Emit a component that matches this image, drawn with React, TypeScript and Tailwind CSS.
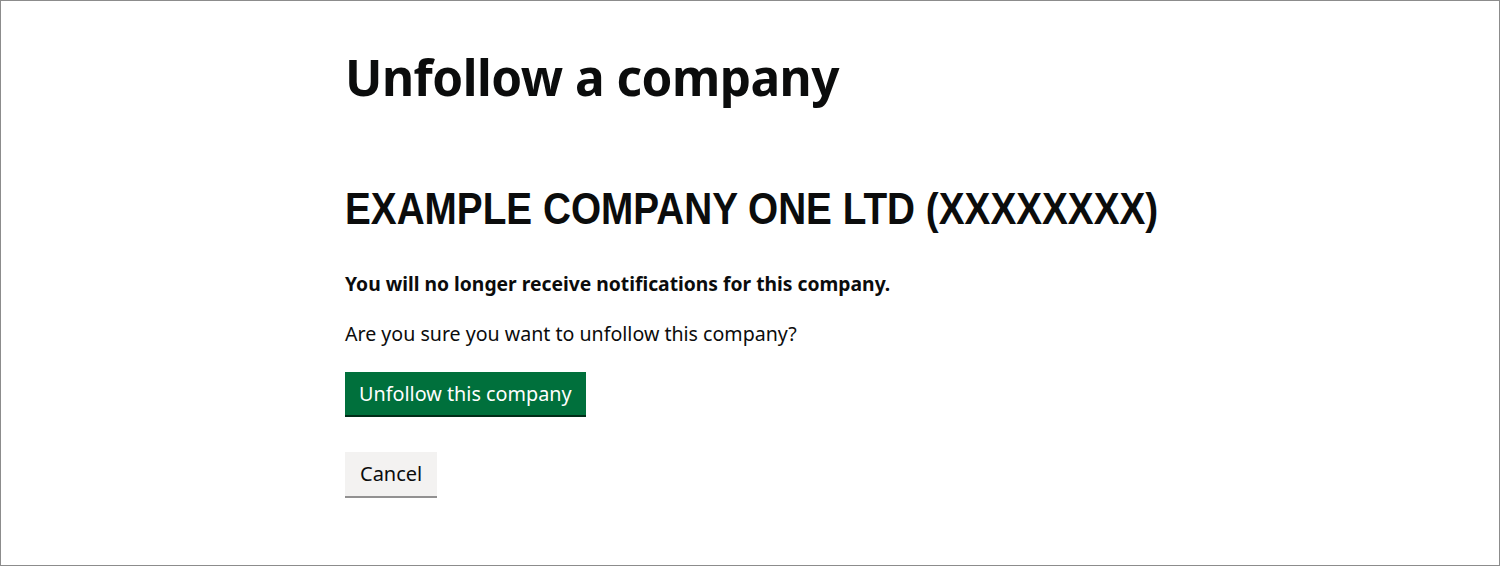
import React from 'react';

export default function App() {
  return (
    <div className="w-[1500px] h-[566px] border border-[#8c8c8c] bg-white text-[#0b0c0c] overflow-hidden" style={{ fontFamily: '"Noto Sans", Arial, sans-serif' }}>
      <main className="pl-[344px] pt-[44px] flex flex-col items-start">
        <h1 className="text-[49.5px] leading-[64px] font-bold tracking-[-0.5px]">Unfollow a company</h1>
        <h2
          className="mt-[75px] text-[44px] leading-[50px] font-bold origin-left scale-x-[0.88] whitespace-nowrap"
          style={{ fontFamily: '"Liberation Sans", Arial, sans-serif' }}
        >
          EXAMPLE COMPANY ONE LTD (XXXXXXXX)
        </h2>
        <p className="mt-[36px] text-[19.3px] leading-[28px] font-bold">
          You will no longer receive notifications for this company.
        </p>
        <p className="mt-[22px] text-[19.6px] leading-[28px]">Are you sure you want to unfollow this company?</p>
        <button className="mt-[24px] h-[43px] px-[14px] bg-[#00703c] text-white text-[19.8px] shadow-[0_2px_0_#002d18]">
          Unfollow this company
        </button>
        <button className="mt-[37px] h-[44px] px-[15px] bg-[#f3f2f1] text-[#0b0c0c] text-[20px] shadow-[0_2px_0_#929191]">
          Cancel
        </button>
      </main>
    </div>
  );
}
